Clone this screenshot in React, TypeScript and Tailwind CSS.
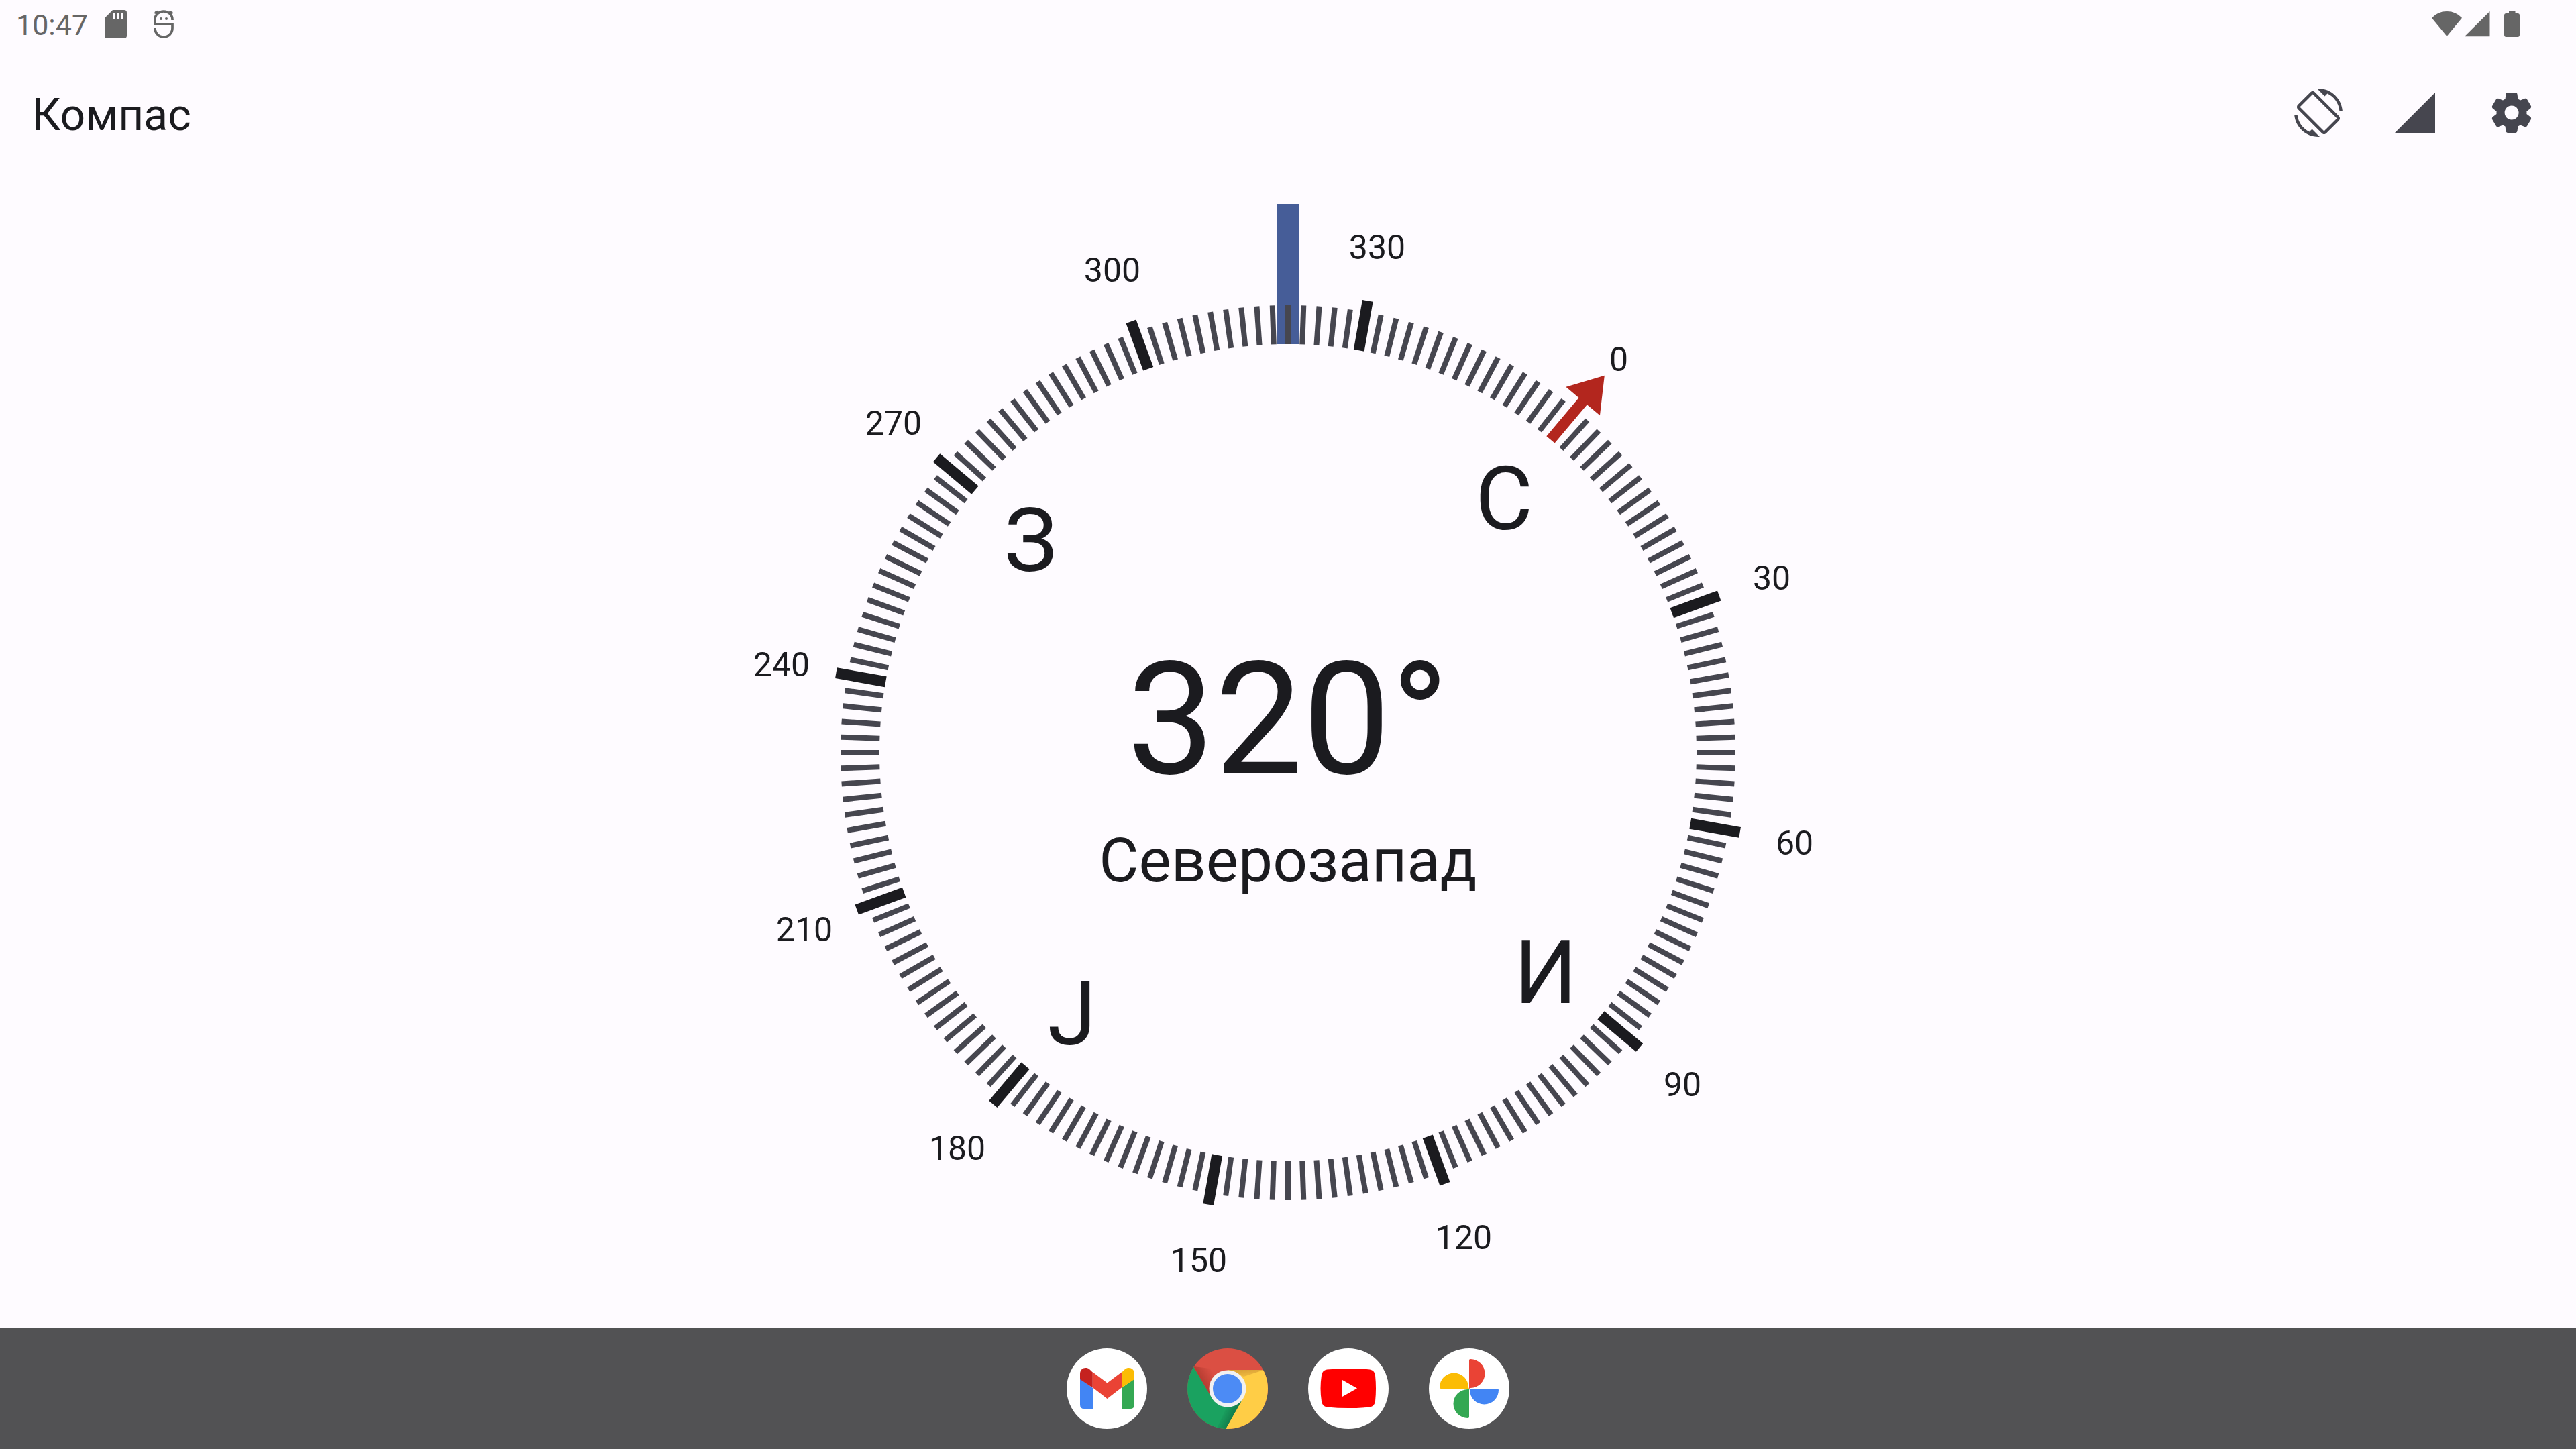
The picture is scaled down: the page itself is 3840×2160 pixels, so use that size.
const MINOR = Array.from({ length: 180 }, (_, i) => i * 2).filter((d) => d % 30 !== 0);
const MAJOR = Array.from({ length: 12 }, (_, i) => i * 30);
const HEADING = 320;

const CARDINALS = [
  { degree: 0, letter: "С" },
  { degree: 90, letter: "И" },
  { degree: 180, letter: "Ј" },
  { degree: 270, letter: "З" },
];

function place(degree: number, radius: number) {
  const a = ((degree - HEADING) * Math.PI) / 180;
  return { x: Math.round(Math.sin(a) * radius), y: Math.round(-Math.cos(a) * radius) };
}

function Dial() {
  return (
    <svg viewBox="-858 -858 1716 1716" className="col-start-1 row-start-1 h-full" role="img" aria-label="Компас">
      <rect x="-17" y="-818" width="34" height="209" fill="#465d98" />
      <g fill="#46464f">
        {MINOR.map((d) => (
          <rect key={d} x="-4" y="-667" width="8" height="58" transform={`rotate(${d - HEADING})`} />
        ))}
      </g>
      <g fill="#1b1b1f">
        {MAJOR.filter((d) => d !== 0).map((d) => (
          <rect key={d} x="-8" y="-684" width="16" height="75" transform={`rotate(${d - HEADING})`} />
        ))}
      </g>
      <path d="M-8-609V-684H-33L0-734L33-684H8V-609Z" fill="#b3261e" transform={`rotate(${-HEADING})`} />
      <g fill="#1b1b1f" textAnchor="middle" className="text-[50px]">
        {MAJOR.map((d) => {
          const p = place(d, 767);
          return <text key={d} x={p.x} y={p.y + 19}>{d}</text>;
        })}
      </g>
      <g fill="#1b1b1f" textAnchor="middle" className="text-[132px]">
        {CARDINALS.map(({ degree, letter }) => {
          const p = place(degree, 501);
          return <text key={degree} x={p.x} y={p.y + 51}>{letter}</text>;
        })}
      </g>
    </svg>
  );
}

function StatusBar() {
  return (
    <div className="flex h-[72px] shrink-0 items-center justify-between pr-[82px] pl-6 text-[#666666]">
      <div className="flex items-center">
        <time className="pt-0.5 text-[43px] leading-[70px]">10:47</time>
        <svg viewBox="0 0 33 42" className="ml-[25px] h-[42px] w-[33px]" fill="currentColor" aria-hidden="true">
          <path fillRule="evenodd" d="M12 0H29Q33 0 33 4V38Q33 42 29 42H4Q0 42 0 38V12ZM12 5V13H16V5ZM18 5V13H22V5ZM24 5V13H28V5Z" />
        </svg>
        <svg viewBox="0 0 30 42" className="ml-[40px] h-[42px] w-[30px]" fill="none" stroke="currentColor" strokeWidth="3.7" aria-hidden="true">
          <path d="M28 15V14A13 12 0 0 0 2 14V21H28V27A13 13 0 0 1 2 27" />
          <path d="M1.500 3.500L7 6M4.500 1.500L7 6M28.500 3.500L23 6M25.500 1.500L23 6" strokeWidth="3.200" />
          <circle cx="11" cy="13" r="2" fill="currentColor" stroke="none" />
          <circle cx="19" cy="13" r="2" fill="currentColor" stroke="none" />
        </svg>
      </div>
      <svg viewBox="0 0 134 42" className="h-[42px] w-[134px]" fill="currentColor" aria-hidden="true">
        <path d="M1 11.700Q10 2 23.500 2T46 11.700L23.500 39Z" />
        <path d="M50 39.300L87.500 2V39.300Z" />
        <path d="M116 1H125.500V5H129Q132 5 132 8V37Q132 40 129 40H112Q109 40 109 37V8Q109 5 112 5H116Z" />
      </svg>
    </div>
  );
}

function AppBar() {
  return (
    <header className="flex h-[192px] shrink-0 items-center justify-between pr-6 pl-12">
      <h1 className="pt-2 text-[66px] leading-[78px] text-[#1b1b1f]">Компас</h1>
      <div className="flex items-center text-[#46464f]">
        <button type="button" aria-label="Ротација екрана" className="grid size-[144px] place-items-center">
          <svg viewBox="0 0 24 24" className="size-[72px]" fill="currentColor" aria-hidden="true">
            <path d="M16.480 2.520c3.270 1.550 5.610 4.720 5.970 8.480h1.500C23.440 4.840 18.290 0 12 0l-.66.030 3.810 3.810 1.330-1.320zm-6.250-.77c-.59-.59-1.540-.59-2.120 0L1.750 8.110c-.59.59-.59 1.540 0 2.120l12.020 12.020c.59.590 1.540.590 2.120 0l6.360-6.360c.59-.59.590-1.540 0-2.120L10.230 1.750zm4.600 19.440L2.810 9.170l6.360-6.360 12.020 12.020-6.360 6.360zm-7.310.29C4.250 19.940 1.910 16.760 1.550 13H.05C.56 19.160 5.710 24 12 24l.66-.03-3.810-3.810-1.330 1.320z" />
          </svg>
        </button>
        <button type="button" aria-label="Јачина магнетног поља" className="grid size-[144px] place-items-center">
          <svg viewBox="0 0 24 24" className="size-[72px]" fill="currentColor" aria-hidden="true">
            <path d="M2 22h20V2z" />
          </svg>
        </button>
        <button type="button" aria-label="Подешавања" className="grid size-[144px] place-items-center">
          <svg viewBox="0 0 24 24" className="size-[72px]" fill="currentColor" aria-hidden="true">
            <path d="M19.500 12c0-.23-.01-.45-.03-.68l1.860-1.410c.4-.3.510-.86.260-1.300l-1.870-3.230c-.25-.44-.79-.62-1.250-.42l-2.150.91c-.37-.26-.76-.49-1.170-.68l-.29-2.310C14.800 2.380 14.370 2 13.870 2h-3.730c-.51 0-.94.380-1 .88l-.29 2.310c-.41.190-.80.420-1.170.68l-2.150-.91c-.46-.2-1-.02-1.250.42L2.410 8.620c-.25.440-.14.990.26 1.300l1.860 1.410C4.510 11.550 4.500 11.770 4.500 12s.01.450.03.680l-1.860 1.410c-.4.300-.51.860-.26 1.300l1.870 3.230c.25.440.79.620 1.250.42l2.150-.91c.37.260.76.490 1.170.68l.29 2.310c.06.500.49.880.99.880h3.730c.5 0 .93-.38.990-.88l.29-2.310c.41-.19.800-.42 1.170-.68l2.150.91c.46.200 1 .02 1.250-.42l1.870-3.230c.25-.44.140-.99-.26-1.300l-1.860-1.410c.03-.23.040-.45.040-.68zM12.040 15.500c-1.930 0-3.500-1.570-3.500-3.500s1.570-3.500 3.500-3.500 3.500 1.570 3.500 3.500-1.570 3.500-3.500 3.500z" />
          </svg>
        </button>
      </div>
    </header>
  );
}

function Gmail() {
  return (
    <svg viewBox="0 0 120 120" className="size-[120px]" aria-hidden="true">
      <circle cx="60" cy="60" r="60" fill="#fff" />
      <path d="M20 45L39 59V90H26Q20 90 20 84Z" fill="#4285f4" />
      <path d="M101 45L82 59V90H95Q101 90 101 84Z" fill="#34a853" />
      <path d="M38.500 35L60.500 51.500L82.500 35V58L60.500 75L38.500 58Z" fill="#ea4335" />
      <path d="M20 46V38C20 29 29 27 34 31L38.700 35.500V58.500Z" fill="#c5221f" />
      <path d="M101 46V38C101 29 92 27 87 31L82.300 35.500V58.500Z" fill="#fbbc04" />
    </svg>
  );
}

function Chrome() {
  return (
    <svg viewBox="0 0 120 120" className="size-[120px]" aria-hidden="true">
      <defs>
        <clipPath id="disc"><circle cx="60" cy="60" r="60" /></clipPath>
        <linearGradient id="red-shade" x1="16" y1="44" x2="36" y2="32" gradientUnits="userSpaceOnUse">
          <stop offset="0" stopColor="#b23a2f" /><stop offset="1" stopColor="#db4f43" />
        </linearGradient>
        <linearGradient id="green-shade" x1="70" y1="100" x2="54" y2="92" gradientUnits="userSpaceOnUse">
          <stop offset="0" stopColor="#127a4a" /><stop offset="1" stopColor="#1aa260" />
        </linearGradient>
        <linearGradient id="yellow-shade" x1="80" y1="32" x2="82" y2="50" gradientUnits="userSpaceOnUse">
          <stop offset="0" stopColor="#d9a036" /><stop offset="1" stopColor="#ffcd46" />
        </linearGradient>
      </defs>
      <g clipPath="url(#disc)">
        <rect width="120" height="120" fill="#db4f43" />
        <path d="M9 27L34 70L60 33Z" fill="url(#red-shade)" />
        <path d="M60 32H120V120H57L84 72Z" fill="#ffcd46" />
        <path d="M60 32H114L84 42Z" fill="url(#yellow-shade)" />
        <path d="M9 27L34 70L60 86L82 76L57 120H0V27Z" fill="#1aa260" />
        <path d="M60 84L82 76L57 120L44 119Z" fill="url(#green-shade)" />
      </g>
      <circle cx="60" cy="60" r="27.500" fill="#f1f1f1" />
      <circle cx="60" cy="60" r="22" fill="#4c8bf5" />
    </svg>
  );
}

function YouTube() {
  return (
    <svg viewBox="0 0 120 120" className="size-[120px]" aria-hidden="true">
      <circle cx="60" cy="60" r="60" fill="#fff" />
      <path d="M28 31.500Q60 28.500 92 31.500Q99 32.500 100 40Q102 60 100 79Q99 86.500 92 87.500Q60 90.500 28 87.500Q21 86.500 20 79Q17 60 20 40Q21 32.500 28 31.500Z" fill="#f00" />
      <path d="M51 47V72L73 59.500Z" fill="#fff" />
    </svg>
  );
}

function Photos() {
  return (
    <svg viewBox="0 0 120 120" className="size-[120px]" aria-hidden="true">
      <circle cx="60" cy="60" r="60" fill="#fff" />
      <path d="M60 60V18Q60 16 62 16A21.500 21.500 0 0 1 62 59Z" fill="#ea4335" />
      <path d="M60 60H102Q104 60 104 62A21.500 21.500 0 0 1 61 62Z" fill="#4285f4" />
      <path d="M60 60V102Q60 104 58 104A21.500 21.500 0 0 1 58 61Z" fill="#34a853" />
      <path d="M60 60H18Q16 60 16 58A21.500 21.500 0 0 1 59 58Z" fill="#fbbc04" />
    </svg>
  );
}

const APPS = [
  { name: "Gmail", Icon: Gmail },
  { name: "Chrome", Icon: Chrome },
  { name: "YouTube", Icon: YouTube },
  { name: "Photos", Icon: Photos },
];

export default function App() {
  return (
    <div className="flex h-screen flex-col bg-[#fefbff] font-[Roboto,sans-serif]">
      <StatusBar />
      <AppBar />
      <main className="grid min-h-0 flex-1 place-items-center grid-rows-1 text-[#1b1b1f]">
        <Dial />
        <div className="col-start-1 row-start-1 flex flex-col items-center">
          <p className="text-[233px] leading-[322px]">320°</p>
          <p className="text-[91px] leading-[96px]">Северозапад</p>
        </div>
      </main>
      <nav aria-label="Апликације" className="flex h-[180px] shrink-0 items-center justify-center gap-[60px] bg-[#525254]">
        {APPS.map(({ name, Icon }) => (
          <button key={name} type="button" aria-label={name} className="rounded-full">
            <Icon />
          </button>
        ))}
      </nav>
    </div>
  );
}
